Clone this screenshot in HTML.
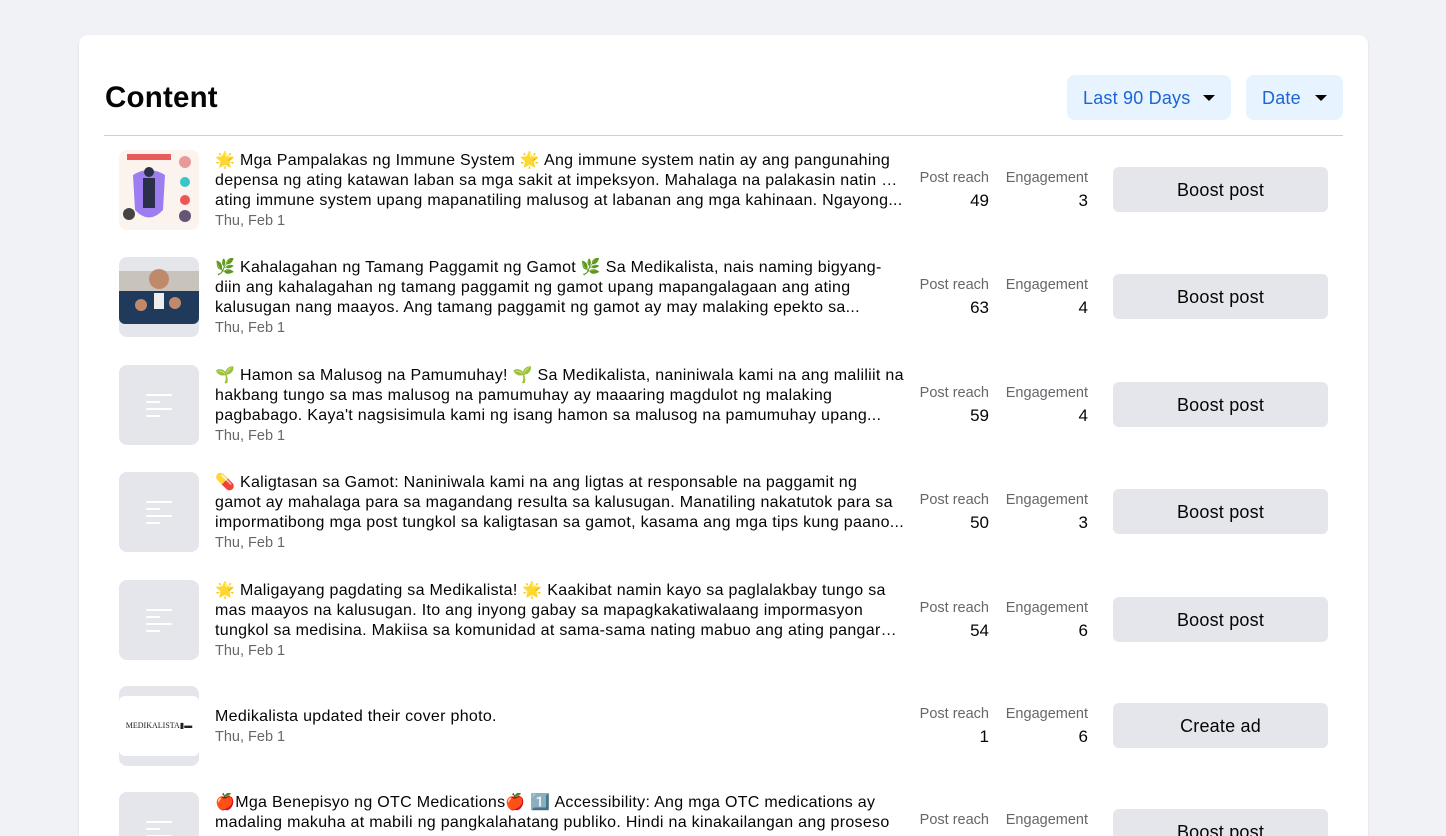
<!DOCTYPE html>
<html><head><meta charset="utf-8"><style>
*{box-sizing:border-box;margin:0;padding:0}
html,body{width:1446px;height:836px;overflow:hidden}
body{background:#f0f2f5;font-family:"Liberation Sans","Noto Sans CJK JP",sans-serif;color:#050505;position:relative}
.card{position:absolute;left:79px;top:35px;width:1289px;height:820px;background:#fff;border-radius:9px;box-shadow:0 1px 2px rgba(0,0,0,.1)}
h1{position:absolute;left:105px;top:81px;font-size:29.5px;font-weight:bold;letter-spacing:0.2px}
.dd{position:absolute;top:75px;height:45px;background:#e7f3ff;border-radius:8px;color:#1b65d6;font-size:18px;line-height:46px;padding-left:16px;letter-spacing:0.2px}
.dd:after{content:"";position:absolute;right:16px;top:20px;border-left:6px solid transparent;border-right:6px solid transparent;border-top:6px solid #050505}
.hr{position:absolute;left:104px;top:135px;width:1239px;height:1px;background:#ced0d4}
.row{position:absolute;left:0;width:1446px;height:100px}
.th{position:absolute;left:119px;top:0;width:80px;height:80px;border-radius:8px;background:#e4e6eb;overflow:hidden}
.th i{position:absolute;left:27px;height:2px;background:#fff;border-radius:1px}
.tx{position:absolute;left:215px;top:1px;width:690px;font-size:16px;line-height:20px;letter-spacing:0.3px}
.tx div{white-space:nowrap;overflow:hidden;text-overflow:ellipsis}
.dt{color:#65676b;font-size:14.5px;letter-spacing:0}
.lb{position:absolute;top:20px;font-size:14.5px;color:#65676b;text-align:right}
.nm{position:absolute;top:41px;font-size:17px;text-align:right}
.bt{position:absolute;left:1113px;top:17px;width:215px;height:45px;background:#e4e6eb;border-radius:6px;text-align:center;line-height:46px;font-size:18px;letter-spacing:0.2px}
</style></head><body>
<div class="card"></div>
<h1>Content</h1>
<div class="dd" style="left:1067px;width:164px">Last 90 Days</div>
<div class="dd" style="left:1246px;width:97px">Date</div>
<div class="hr"></div>

<div class="row" style="top:150px">
<div class="th" style="background:#fbf3ee"><svg width="80" height="80"><rect x="8" y="4" width="44" height="6" fill="#e95b5b"/><path d="M14 25 Q30 15 46 25 L44 60 Q30 75 16 60Z" fill="#9d7ef0"/><rect x="24" y="28" width="12" height="30" fill="#2c2f4a"/><circle cx="30" cy="22" r="5" fill="#2c2f4a"/><circle cx="66" cy="12" r="6" fill="#e89a9a"/><circle cx="66" cy="32" r="5" fill="#39c6c6"/><circle cx="66" cy="50" r="5" fill="#e55"/><circle cx="66" cy="66" r="6" fill="#665577"/><circle cx="10" cy="64" r="6" fill="#444"/></svg></div>
<div class="tx"><div>🌟 Mga Pampalakas ng Immune System 🌟 Ang immune system natin ay ang pangunahing</div><div>depensa ng ating katawan laban sa mga sakit at impeksyon. Mahalaga na palakasin natin ang</div><div>ating immune system upang mapanatiling malusog at labanan ang mga kahinaan. Ngayong...</div><div class="dt">Thu, Feb 1</div></div>
<div class="lb" style="left:900px;width:89px">Post reach</div><div class="nm" style="left:900px;width:89px">49</div>
<div class="lb" style="left:1000px;width:88px">Engagement</div><div class="nm" style="left:1000px;width:88px">3</div>
<div class="bt">Boost post</div></div>

<div class="row" style="top:257px">
<div class="th"><svg width="80" height="80"><rect x="0" y="14" width="80" height="53" rx="6" fill="#1f3a5a"/><rect x="0" y="14" width="80" height="20" fill="#c9c3bd"/><circle cx="40" cy="22" r="10" fill="#c08a6a"/><rect x="35" y="36" width="10" height="16" fill="#eee"/><circle cx="22" cy="48" r="6" fill="#c08a6a"/><circle cx="56" cy="46" r="6" fill="#c08a6a"/></svg></div>
<div class="tx"><div>🌿 Kahalagahan ng Tamang Paggamit ng Gamot 🌿 Sa Medikalista, nais naming bigyang-</div><div>diin ang kahalagahan ng tamang paggamit ng gamot upang mapangalagaan ang ating</div><div>kalusugan nang maayos. Ang tamang paggamit ng gamot ay may malaking epekto sa...</div><div class="dt">Thu, Feb 1</div></div>
<div class="lb" style="left:900px;width:89px">Post reach</div><div class="nm" style="left:900px;width:89px">63</div>
<div class="lb" style="left:1000px;width:88px">Engagement</div><div class="nm" style="left:1000px;width:88px">4</div>
<div class="bt">Boost post</div></div>

<div class="row" style="top:365px">
<div class="th"><i style="top:29px;width:26px"></i><i style="top:36px;width:14px"></i><i style="top:43px;width:26px"></i><i style="top:50px;width:14px"></i></div>
<div class="tx"><div>🌱 Hamon sa Malusog na Pamumuhay! 🌱 Sa Medikalista, naniniwala kami na ang maliliit na</div><div>hakbang tungo sa mas malusog na pamumuhay ay maaaring magdulot ng malaking</div><div>pagbabago. Kaya't nagsisimula kami ng isang hamon sa malusog na pamumuhay upang...</div><div class="dt">Thu, Feb 1</div></div>
<div class="lb" style="left:900px;width:89px">Post reach</div><div class="nm" style="left:900px;width:89px">59</div>
<div class="lb" style="left:1000px;width:88px">Engagement</div><div class="nm" style="left:1000px;width:88px">4</div>
<div class="bt">Boost post</div></div>

<div class="row" style="top:472px">
<div class="th"><i style="top:29px;width:26px"></i><i style="top:36px;width:14px"></i><i style="top:43px;width:26px"></i><i style="top:50px;width:14px"></i></div>
<div class="tx"><div>💊 Kaligtasan sa Gamot: Naniniwala kami na ang ligtas at responsable na paggamit ng</div><div>gamot ay mahalaga para sa magandang resulta sa kalusugan. Manatiling nakatutok para sa</div><div>impormatibong mga post tungkol sa kaligtasan sa gamot, kasama ang mga tips kung paano...</div><div class="dt">Thu, Feb 1</div></div>
<div class="lb" style="left:900px;width:89px">Post reach</div><div class="nm" style="left:900px;width:89px">50</div>
<div class="lb" style="left:1000px;width:88px">Engagement</div><div class="nm" style="left:1000px;width:88px">3</div>
<div class="bt">Boost post</div></div>

<div class="row" style="top:580px">
<div class="th"><i style="top:29px;width:26px"></i><i style="top:36px;width:14px"></i><i style="top:43px;width:26px"></i><i style="top:50px;width:14px"></i></div>
<div class="tx"><div>🌟 Maligayang pagdating sa Medikalista! 🌟 Kaakibat namin kayo sa paglalakbay tungo sa</div><div>mas maayos na kalusugan. Ito ang inyong gabay sa mapagkakatiwalaang impormasyon</div><div>tungkol sa medisina. Makiisa sa komunidad at sama-sama nating mabuo ang ating pangarap...</div><div class="dt">Thu, Feb 1</div></div>
<div class="lb" style="left:900px;width:89px">Post reach</div><div class="nm" style="left:900px;width:89px">54</div>
<div class="lb" style="left:1000px;width:88px">Engagement</div><div class="nm" style="left:1000px;width:88px">6</div>
<div class="bt">Boost post</div></div>

<div class="row" style="top:686px">
<div class="th"><div style="position:absolute;left:0;top:10px;width:80px;height:60px;background:#fff;border-radius:6px;font-family:'Liberation Serif',serif;font-size:8px;line-height:60px;text-align:center;color:#222">MEDIKALISTA▮▬</div></div>
<div class="tx" style="top:21px"><div>Medikalista updated their cover photo.</div><div class="dt">Thu, Feb 1</div></div>
<div class="lb" style="left:900px;width:89px">Post reach</div><div class="nm" style="left:900px;width:89px">1</div>
<div class="lb" style="left:1000px;width:88px">Engagement</div><div class="nm" style="left:1000px;width:88px">6</div>
<div class="bt">Create ad</div></div>

<div class="row" style="top:792px">
<div class="th"><i style="top:29px;width:26px"></i><i style="top:36px;width:14px"></i><i style="top:43px;width:26px"></i><i style="top:50px;width:14px"></i></div>
<div class="tx"><div>🍎Mga Benepisyo ng OTC Medications🍎 1️⃣ Accessibility: Ang mga OTC medications ay</div><div>madaling makuha at mabili ng pangkalahatang publiko. Hindi na kinakailangan ang proseso</div></div>
<div class="lb" style="left:900px;width:89px">Post reach</div>
<div class="lb" style="left:1000px;width:88px">Engagement</div>
<div class="bt">Boost post</div></div>
</body></html>
